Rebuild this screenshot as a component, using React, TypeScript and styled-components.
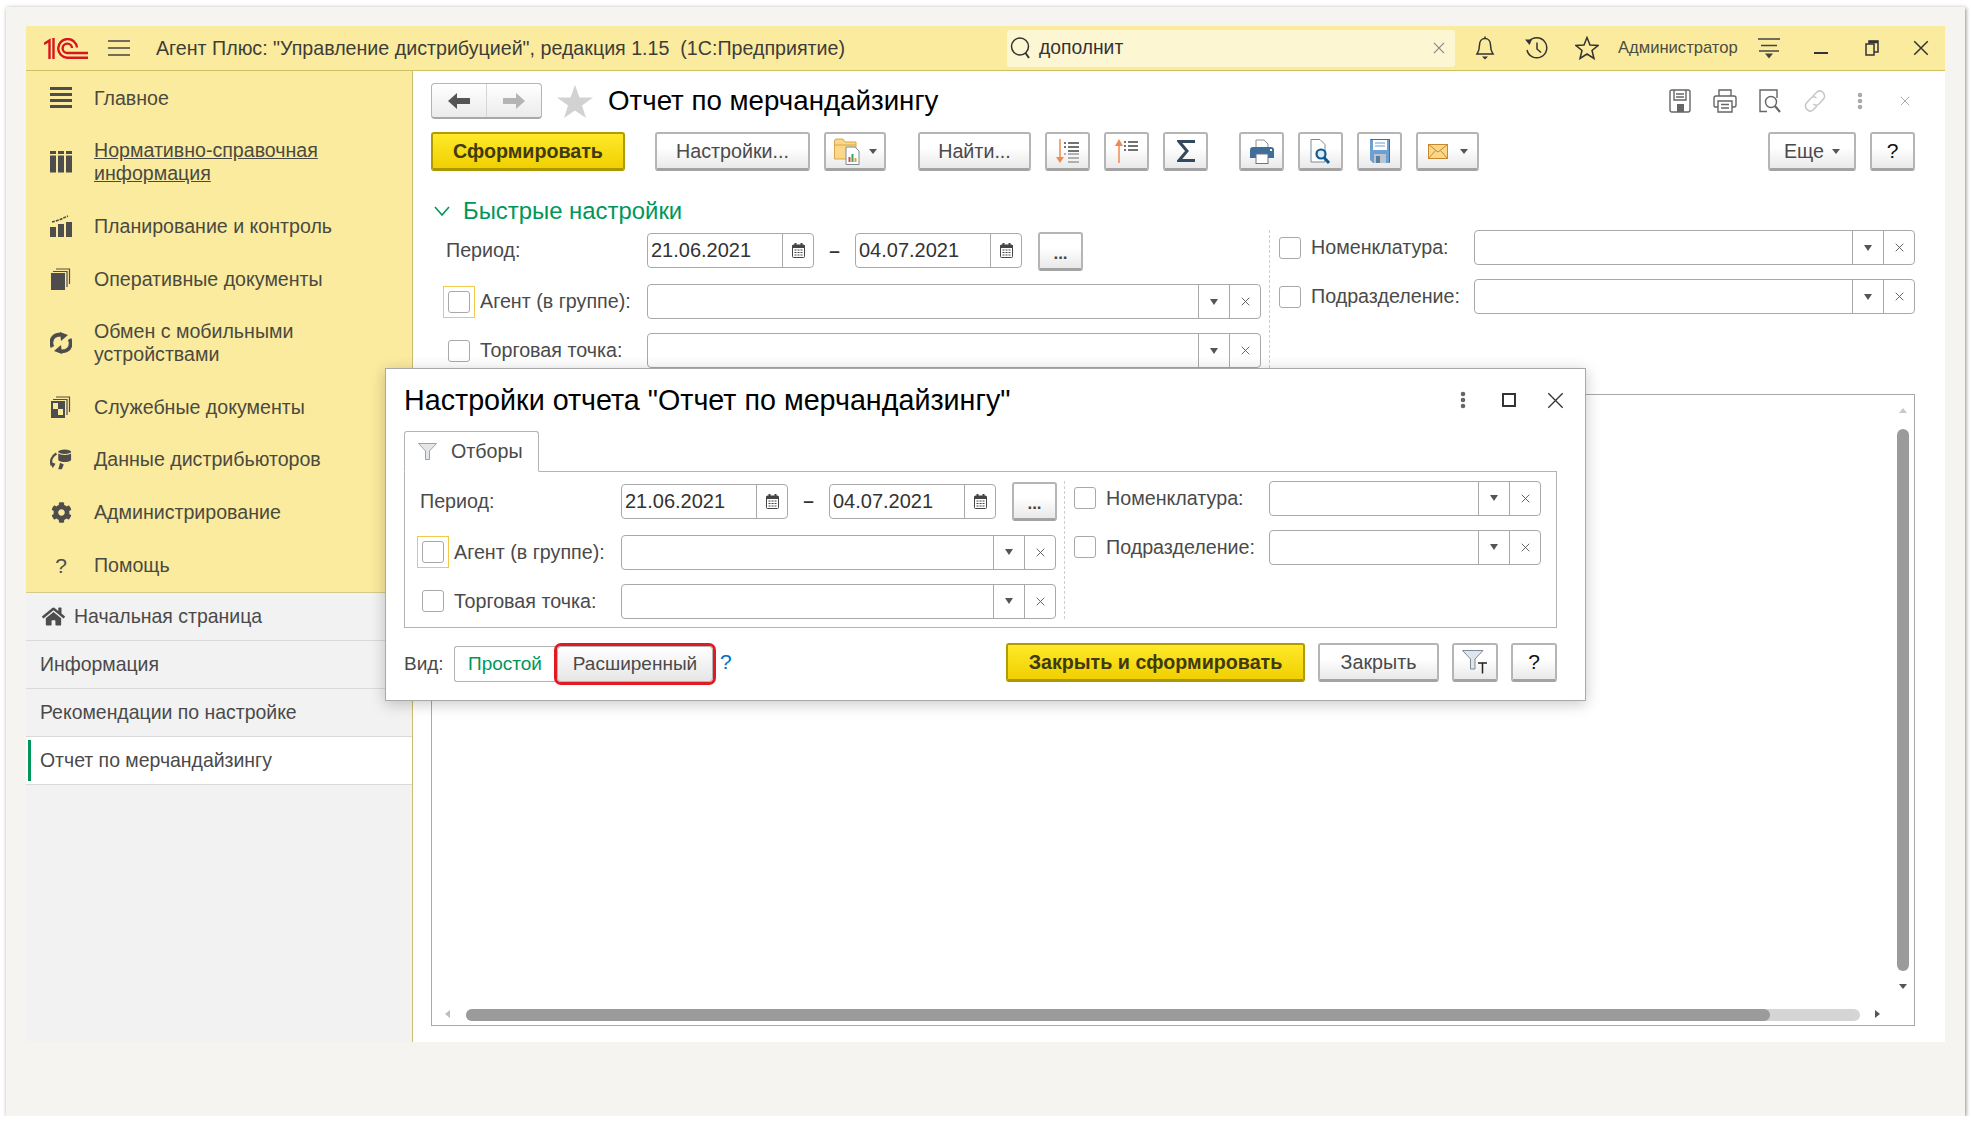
import React from 'react';
import styled, { createGlobalStyle } from 'styled-components';
import { FaCog, FaHome } from 'react-icons/fa';

const GlobalStyle = createGlobalStyle`
  html, body {
    margin: 0;
    padding: 0;
    background: #ffffff;
  }
  * {
    box-sizing: border-box;
  }
  body {
    font-family: "Liberation Sans", Arial, sans-serif;
    color: #4a4a4a;
  }
`;

const Frame = styled.div`
  position: relative;
  width: 1959px;
  height: 1109px;
  margin: 7px 0 0 6px;
  padding: 19px 20px 74px;
  background: #f5f4f1;
  box-shadow: 1px 1px 4px rgba(0, 0, 0, 0.45);
`;

const AppWindow = styled.div`
  display: flex;
  flex-direction: column;
  height: 100%;
`;

const Header = styled.header`
  display: flex;
  align-items: center;
  flex: 0 0 45px;
  padding-left: 18px;
  background: #fbeb9f;
  border-bottom: 1px solid #cfc163;
`;

const HamburgerSlot = styled.div`
  display: flex;
  margin-left: 20px;
`;

const AppTitle = styled.div`
  flex: 1;
  margin-left: 26px;
  font-size: 19.65px;
  color: #3d3d38;
  white-space: pre;
`;

const SearchBox = styled.div`
  display: flex;
  align-items: center;
  width: 448px;
  height: 37px;
  margin-right: 4px;
  padding: 0 10px 0 3px;
  background: #fdf6d3;
  border-radius: 3px;
  font-size: 19.3px;
  color: #333;
`;

const SearchText = styled.span`
  flex: 1;
  margin-left: 7px;
`;

const HeaderSlot = styled.div<{ $w?: number }>`
  display: flex;
  align-items: center;
  justify-content: center;
  width: ${(p) => p.$w ?? 51}px;
`;

const UserName = styled.div`
  width: 130px;
  padding-left: 6px;
  font-size: 16.6px;
  color: #4d4d40;
`;

const Body = styled.div`
  display: flex;
  flex: 1;
  min-height: 0;
`;

const Sidebar = styled.aside`
  display: flex;
  flex-direction: column;
  flex: 0 0 387px;
  background: #f2f2f2;
  border-right: 1px solid #c9bf6d;
`;

const MainMenu = styled.nav`
  padding: 1px 0;
  background: #fbeb9f;
  border-bottom: 1px solid #d4ca8c;
`;

const MenuItem = styled.div`
  display: flex;
  align-items: center;
  padding: 14.8px 0 14.8px 24px;
  font-size: 19.6px;
  line-height: 23px;
  color: #4a4a3f;
`;

const MenuIcon = styled.div`
  display: flex;
  align-items: center;
  justify-content: center;
  flex: 0 0 22px;
  height: 23px;
  margin-right: 22px;
  color: #4d4d4d;
  font-size: 21px;
  line-height: 23px;
`;

const MenuLink = styled.span`
  text-decoration: underline;
`;

const OpenRow = styled.div<{ $active?: boolean }>`
  position: relative;
  display: flex;
  align-items: center;
  height: 48px;
  padding-left: 14px;
  font-size: 19.45px;
  color: #4a4a4a;
  background: ${(p) => (p.$active ? '#ffffff' : 'transparent')};
  border-bottom: 1px solid #d9d9d9;

  ${(p) =>
    p.$active &&
    `&::before {
      content: '';
      position: absolute;
      left: 2px;
      top: 3px;
      bottom: 3px;
      width: 3px;
      background: #00965a;
    }`}
`;

const HomeIcon = styled(FaHome)`
  margin: 0 9px 0 2px;
  font-size: 23px;
  color: #4d4d4d;
`;

const Main = styled.main`
  display: flex;
  flex-direction: column;
  flex: 1;
  min-width: 0;
  padding: 12px 30px 16px 18px;
  background: #ffffff;
`;

const TitleRow = styled.div`
  display: flex;
  align-items: center;
  height: 36px;
`;

const NavGroup = styled.div`
  display: flex;
  width: 111px;
  height: 36px;
  border: 1px solid #b4b4b4;
  border-bottom: 2px solid #a8a8a8;
  border-radius: 4px;
  background: linear-gradient(#ffffff, #ebebeb);
`;

const NavCell = styled.div<{ $first?: boolean }>`
  display: flex;
  align-items: center;
  justify-content: center;
  flex: 1;
  border-right: ${(p) => (p.$first ? '1px solid #d6d6d6' : 'none')};
`;

const FavStar = styled.div`
  display: flex;
  margin: 0 15px;
`;

const PageTitle = styled.h1`
  flex: 1;
  margin: 0;
  font-size: 27.7px;
  font-weight: normal;
  color: #000;
`;

const PageTools = styled.div`
  display: flex;
  margin-right: -12px;
`;

const ToolSlot = styled.div`
  display: flex;
  align-items: center;
  justify-content: center;
  width: 45px;
`;

const Toolbar = styled.div`
  display: flex;
  margin-top: 13px;
`;

const ToolGroup = styled.div<{ $after?: number; $push?: boolean }>`
  display: flex;
  gap: 14px;
  margin-right: ${(p) => p.$after ?? 0}px;
  margin-left: ${(p) => (p.$push ? 'auto' : '0')};
`;

const Button = styled.div<{ $w: number; $h?: number; $primary?: boolean; $gap?: number }>`
  display: flex;
  align-items: center;
  justify-content: center;
  gap: ${(p) => p.$gap ?? 0}px;
  flex: 0 0 ${(p) => p.$w}px;
  width: ${(p) => p.$w}px;
  height: ${(p) => p.$h ?? 39}px;
  border-radius: 3px;
  font-size: 19.7px;
  font-weight: ${(p) => (p.$primary ? 'bold' : 'normal')};
  color: ${(p) => (p.$primary ? '#3f3a10' : '#4a4a4a')};
  background: ${(p) =>
    p.$primary ? 'linear-gradient(#ffe92a, #f0d000)' : 'linear-gradient(#ffffff 40%, #e9e9e9)'};
  border: 2px solid ${(p) => (p.$primary ? '#b09c00' : '#b5b5b5')};
  border-bottom-width: 3px;
  border-bottom-color: ${(p) => (p.$primary ? '#ab9700' : '#a3a3a3')};
`;

const Caret = styled.span`
  width: 0;
  height: 0;
  border-left: 4px solid transparent;
  border-right: 4px solid transparent;
  border-top: 5px solid #555;
`;

const HelpMark = styled.span`
  font-size: 21px;
  color: #111;
`;

const QuickHeader = styled.div`
  display: flex;
  align-items: center;
  height: 26px;
  margin-top: 27px;
  font-size: 23.9px;
  color: #00965a;
`;

const QuickChevron = styled.div`
  display: flex;
  margin: 0 13px 0 3px;
`;

const QuickForm = styled.div`
  margin: 6px 0 0 12px;
`;

const FormGrid = styled.div<{ $left: number; $right: number }>`
  display: grid;
  grid-template-columns: ${(p) => p.$left}px 1fr;
  width: ${(p) => p.$left + p.$right + 18}px;
`;

const LeftColumn = styled.div`
  display: flex;
  flex-direction: column;
  gap: 14px;
  padding: 3px 0 0;
`;

const RightColumn = styled.div`
  display: flex;
  flex-direction: column;
  gap: 14px;
  margin-left: 8px;
  padding-left: 9px;
  border-left: 1px dashed #cfcfcf;
`;

const FormRow = styled.div<{ $period?: boolean }>`
  display: flex;
  align-items: center;
  height: 35px;
  margin-bottom: ${(p) => (p.$period ? 2 : 0)}px;
`;

const LabelCell = styled.div<{ $w: number }>`
  display: flex;
  align-items: center;
  flex: 0 0 ${(p) => p.$w}px;
  font-size: 19.7px;
  color: #4a4a4a;
`;

const PeriodLabel = styled.span`
  margin-left: 3px;
`;

const CheckWrap = styled.div<{ $focus?: boolean }>`
  display: flex;
  align-items: center;
  justify-content: center;
  flex: 0 0 32px;
  height: 32px;
  margin-right: 5px;
  border: 1px solid ${(p) => (p.$focus ? '#f2c94c' : 'transparent')};
`;

const Check = styled.div`
  width: 22px;
  height: 22px;
  background: #fff;
  border: 1px solid #a9a9a9;
  border-radius: 3px;
`;

const RightCheck = styled(Check)`
  margin: 0 10px 0 0;
`;

const Field = styled.div<{ $w?: number }>`
  display: flex;
  align-items: stretch;
  flex: ${(p) => (p.$w ? `0 0 ${p.$w}px` : '1')};
  height: 35px;
  background: #fff;
  border: 1px solid #a9a9a9;
  border-radius: 4px;
`;

const FieldText = styled.div`
  display: flex;
  align-items: center;
  flex: 1;
  padding-left: 3px;
  font-size: 20px;
  color: #333;
`;

const FieldCell = styled.div`
  display: flex;
  align-items: center;
  justify-content: center;
  flex: 0 0 31px;
  border-left: 1px solid #a9a9a9;
`;

const DateDash = styled.div`
  flex: 0 0 41px;
  text-align: center;
  font-size: 19px;
  font-weight: bold;
  color: #333;
`;

const PickButton = styled(Button)`
  margin: -3px 0 -4px 16px;
  padding-top: 6px;
  font-size: 17px;
  font-weight: bold;
  color: #444;
`;

const ReportBox = styled.div`
  position: relative;
  flex: 1;
  margin-top: 26px;
  background: #fff;
  border: 1px solid #a9a9a9;
`;

const ScrollThumbV = styled.div`
  position: absolute;
  top: 34px;
  right: 5px;
  width: 12px;
  height: 542px;
  background: #9b9b9b;
  border-radius: 6px;
`;

const ScrollTrackH = styled.div`
  position: absolute;
  left: 34px;
  bottom: 4px;
  width: 1394px;
  height: 12px;
  background: #d5d5d5;
  border-radius: 6px;
`;

const ScrollThumbH = styled.div`
  width: 1304px;
  height: 100%;
  background: #9b9b9b;
  border-radius: 6px;
`;

const ScrollArrow = styled.div<{ $dir: 'up' | 'down' | 'left' | 'right' }>`
  position: absolute;
  width: 0;
  height: 0;
  ${(p) => {
    switch (p.$dir) {
      case 'up':
        return `top: 13px; right: 7px; border: 4px solid transparent; border-top: 0; border-bottom: 5px solid #c8c8c8;`;
      case 'down':
        return `bottom: 36px; right: 7px; border: 4px solid transparent; border-bottom: 0; border-top: 5px solid #555;`;
      case 'left':
        return `bottom: 7px; left: 13px; border: 4px solid transparent; border-left: 0; border-right: 5px solid #bdbdbd;`;
      default:
        return `bottom: 7px; right: 34px; border: 4px solid transparent; border-right: 0; border-left: 5px solid #555;`;
    }
  }}
`;

const Dialog = styled.section`
  position: absolute;
  left: 379px;
  top: 361px;
  display: flex;
  flex-direction: column;
  width: 1201px;
  height: 333px;
  padding: 0 28px 0 18px;
  background: #fff;
  border: 1px solid #a9a9a9;
  box-shadow: 0 3px 14px rgba(0, 0, 0, 0.22);
`;

const DialogHead = styled.div`
  display: flex;
  align-items: center;
  flex: 0 0 62px;
  margin-right: -21px;
`;

const DialogTitle = styled.h2`
  flex: 1;
  margin: 0;
  font-size: 28.7px;
  font-weight: normal;
  color: #000;
`;

const DialogTool = styled.div`
  display: flex;
  align-items: center;
  justify-content: center;
  width: 46px;
`;

const Tab = styled.div`
  display: flex;
  align-items: center;
  position: relative;
  z-index: 1;
  width: 135px;
  height: 41px;
  margin-bottom: -1px;
  padding-left: 13px;
  gap: 14px;
  font-size: 19.7px;
  color: #4a4a4a;
  background: #fff;
  border: 1px solid #b4b4b4;
  border-bottom-color: #fff;
  border-radius: 3px 3px 0 0;
`;

const TabPanel = styled.div`
  height: 157px;
  padding: 8.5px 0 0 12px;
  border: 1px solid #b4b4b4;
`;

const DialogFooter = styled.div`
  display: flex;
  align-items: flex-start;
  margin-top: 13.5px;
`;

const ViewLabel = styled.div`
  width: 50px;
  height: 39px;
  line-height: 43px;
  font-size: 19px;
  color: #4a4a4a;
`;

const ViewSimple = styled.div`
  width: 103px;
  height: 36px;
  margin-top: 4px;
  padding-left: 13px;
  line-height: 34px;
  font-size: 19px;
  color: #00965a;
  background: #fff;
  border: 1px solid #b4b4b4;
  border-right: 0;
  border-radius: 3px 0 0 3px;
`;

const ViewExtended = styled.div`
  width: 156px;
  height: 36px;
  margin-top: 4px;
  line-height: 34px;
  text-align: center;
  font-size: 19px;
  color: #4a4a4a;
  background: linear-gradient(#ffffff, #e6e6e6);
  border: 1px solid #b4b4b4;
  border-radius: 4px;
  outline: 3px solid #e21b22;
`;

const ViewHelp = styled.div`
  margin: 3px 0 0 7px;
  line-height: 34px;
  font-size: 21px;
  color: #0070c0;
`;

const FooterButtons = styled.div`
  display: flex;
  gap: 13px;
  margin: 1.5px 0 0 auto;
`;

const StrokeSvg = styled.svg`
  display: block;
  fill: none;
  stroke: currentColor;
  stroke-width: 1.5;
`;

const Logo1C = () => (
  <svg width="44" height="21" viewBox="0 0 44 21" fill="none" stroke="#d8141c" strokeWidth="2.4">
    <path d="M0 6 L5.5 2.5 V21" />
    <path d="M9.5 0 V21" />
    <path d="M44 19.8 H23 A9.4 9.4 0 1 1 33 9.5" />
    <path d="M44 15 H23 A4.7 4.7 0 1 1 28 10" />
  </svg>
);

const Hamburger = () => (
  <svg width="22" height="16" viewBox="0 0 22 16" stroke="#444" strokeWidth="1.4">
    <path d="M0 1 H22 M0 8 H22 M0 15 H22" />
  </svg>
);

const SearchIcon = () => (
  <StrokeSvg width="22" height="24" viewBox="0 0 22 24" color="#333">
    <circle cx="10" cy="10.5" r="8.5" />
    <path d="M15.5 17 L19 22" strokeWidth="2" />
  </StrokeSvg>
);

const ThinX = ({ size = 13, color = '#888', w = 1.3 }: { size?: number; color?: string; w?: number }) => (
  <svg width={size} height={size} viewBox="0 0 13 13" stroke={color} strokeWidth={w}>
    <path d="M1 1 L12 12 M12 1 L1 12" />
  </svg>
);

const BellIcon = () => (
  <StrokeSvg width="22" height="24" viewBox="0 0 22 24" color="#333">
    <path d="M3 18 C5 15 5.5 12 5.5 9 C5.5 5 8 2.5 11 2.5 C14 2.5 16.5 5 16.5 9 C16.5 12 17 15 19 18 Z" />
    <path d="M11 0.5 V2.5" />
    <path d="M8 20.5 H14 L11 23.5 Z" fill="#333" stroke="none" />
  </StrokeSvg>
);

const HistoryIcon = () => (
  <StrokeSvg width="24" height="24" viewBox="0 0 24 24" color="#333">
    <path d="M5 5.5 A10 10 0 1 1 3 14" />
    <path d="M13 6.5 V13 L17 16.5" />
    <path d="M1 3.5 L8 3.5 L5.5 9 Z" fill="#333" stroke="none" />
  </StrokeSvg>
);

const StarOutline = () => (
  <StrokeSvg width="24" height="24" viewBox="0 0 24 24" color="#333">
    <path d="M12 1.5 L15 9 L23 9.5 L17 14.5 L19 22.5 L12 18 L5 22.5 L7 14.5 L1 9.5 L9 9 Z" />
  </StrokeSvg>
);

const UserMenuIcon = () => (
  <svg width="24" height="22" viewBox="0 0 24 22" stroke="#444" strokeWidth="1.5">
    <path d="M1 2 H23 M4 8.5 H20" />
    <path d="M2 14 H22" />
    <path d="M8 16.5 H16 L12 21.5 Z" fill="#444" stroke="none" />
  </svg>
);

const MinimizeIcon = () => (
  <svg width="16" height="16" viewBox="0 0 16 16">
    <rect x="1" y="12" width="14" height="2" fill="#333" />
  </svg>
);

const RestoreIcon = () => (
  <svg width="14" height="16" viewBox="0 0 14 16" fill="none" stroke="#333" strokeWidth="1.5">
    <rect x="1" y="4" width="8" height="11" fill="#fbeb9f" />
    <path d="M4 4 V1 H13 V12 H9" />
    <path d="M4 2 H13" strokeWidth="2.5" />
  </svg>
);

const MenuBars = () => (
  <svg width="22" height="22" viewBox="0 0 22 22" fill="currentColor">
    <rect y="0" width="22" height="3" />
    <rect y="6" width="22" height="3" />
    <rect y="12" width="22" height="3" />
    <rect y="18" width="22" height="3" />
  </svg>
);

const TableIcon = () => (
  <svg width="22" height="22" viewBox="0 0 22 22" fill="currentColor">
    <rect x="0" y="0" width="6" height="3" />
    <rect x="8" y="0" width="6" height="3" />
    <rect x="16" y="0" width="6" height="3" />
    <rect x="0" y="4.5" width="6" height="17" />
    <rect x="8" y="4.5" width="6" height="17" />
    <rect x="16" y="4.5" width="6" height="17" />
  </svg>
);

const ChartIcon = () => (
  <svg width="22" height="22" viewBox="0 0 22 22" fill="currentColor">
    <rect x="0" y="12" width="6" height="10" />
    <rect x="8" y="9" width="6" height="13" />
    <rect x="16" y="7" width="6" height="15" />
    <path d="M2 7 L9 5 L18 1" fill="none" stroke="currentColor" strokeWidth="1.6" strokeDasharray="3 1" />
  </svg>
);

const DocsIcon = () => (
  <svg width="22" height="22" viewBox="0 0 22 22" fill="currentColor">
    <rect x="1" y="5" width="14" height="17" />
    <path d="M3 3.5 H17 V19" fill="none" stroke="currentColor" strokeWidth="1.2" />
    <path d="M6 1 H19.5 V16" fill="none" stroke="currentColor" strokeWidth="1.2" />
  </svg>
);

const DocsCheckIcon = () => (
  <svg width="22" height="22" viewBox="0 0 22 22" fill="currentColor">
    <rect x="1" y="5" width="14" height="17" />
    <rect x="3" y="7" width="5" height="6" fill="#fbeb9f" />
    <rect x="8" y="13" width="5" height="6" fill="#fbeb9f" />
    <path d="M3 3.5 H17 V19" fill="none" stroke="currentColor" strokeWidth="1.2" />
    <path d="M6 1 H19.5 V16" fill="none" stroke="currentColor" strokeWidth="1.2" />
  </svg>
);

const SyncIcon = () => (
  <svg width="22" height="22" viewBox="0 0 22 22" fill="none" stroke="currentColor" strokeWidth="3.8">
    <path d="M2.5 15 A9 9 0 0 1 3.5 5 Q6 2.5 11 2.5" />
    <path d="M19.5 7 A9 9 0 0 1 18.5 17 Q16 19.5 11 19.5" />
    <path d="M10 0 L18 3 L11 9 Z" fill="currentColor" stroke="none" />
    <path d="M12 22 L4 19 L11 13 Z" fill="currentColor" stroke="none" />
  </svg>
);

const DistributorIcon = () => (
  <svg width="22" height="22" viewBox="0 0 24 24" fill="currentColor">
    <ellipse cx="16" cy="3" rx="7" ry="2.5" />
    <path d="M9 5 C11 7 21 7 23 5 V12 C21 15 11 15 9 12 Z" />
    <path d="M7 5 C2 8 0 13 2 18" fill="none" stroke="currentColor" strokeWidth="2.6" />
    <path d="M0 14 L6 16 L3 21 Z" />
    <path d="M15 17 L13 22 H9 L11 15 Z" />
  </svg>
);

const ArrowLeft = ({ color }: { color: string }) => (
  <svg width="22" height="16" viewBox="0 0 22 16" fill={color}>
    <path d="M0 8 L9 0 V5 H22 V11 H9 V16 Z" />
  </svg>
);

const ArrowRight = ({ color }: { color: string }) => (
  <svg width="22" height="16" viewBox="0 0 22 16" fill={color}>
    <path d="M22 8 L13 0 V5 H0 V11 H13 V16 Z" />
  </svg>
);

const BigStar = () => (
  <svg width="36" height="33" viewBox="0 0 36 33" fill="#d2d2d2">
    <path d="M18 0 L22.5 12.5 L36 12.5 L25 20.5 L29 33 L18 25.5 L7 33 L11 20.5 L0 12.5 L13.5 12.5 Z" />
  </svg>
);

const SmallSaveIcon = () => (
  <svg width="22" height="24" viewBox="0 0 22 24" fill="none" stroke="#666" strokeWidth="1.4">
    <path d="M1 3 Q1 1 3 1 H19 Q21 1 21 3 V21 Q21 23 19 23 H3 Q1 23 1 21 Z" />
    <path d="M5 1 V11 H17 V1 M7 5 H15 M7 8 H15" />
    <rect x="8" y="15" width="7" height="8" fill="#666" stroke="none" />
  </svg>
);

const SmallPrintIcon = () => (
  <svg width="24" height="24" viewBox="0 0 24 24" fill="none" stroke="#666" strokeWidth="1.4">
    <path d="M6 7 V1 H18 V7" />
    <path d="M5 18 H2 Q1 18 1 16 V9 Q1 7 3 7 H21 Q23 7 23 9 V16 Q23 18 21 18 H19" />
    <path d="M5 12 H19 V23 H5 Z" />
    <path d="M8 15.5 H16 M8 19 H16" />
  </svg>
);

const SmallPreviewIcon = () => (
  <svg width="24" height="24" viewBox="0 0 24 24" fill="none" stroke="#666" strokeWidth="1.4">
    <path d="M9 22.5 H2 V1 H19 V9" />
    <circle cx="13" cy="13" r="5.5" />
    <path d="M17 17 L22 23" strokeWidth="2.2" />
  </svg>
);

const SmallLinkIcon = () => (
  <svg width="24" height="24" viewBox="0 0 24 24" fill="none" stroke="#c6c6c6" strokeWidth="1.5">
    <path d="M10 7 L14 3 Q17 0.5 20 3.5 Q23 7 20.5 10 L16 15 Q13 17.5 10.5 15" />
    <path d="M14 17 L10 21 Q7 23.5 4 20.5 Q1 17 3.5 14 L8 9 Q11 6.5 13.5 9" />
  </svg>
);

const Dots = ({ color, h = 18 }: { color: string; h?: number }) => (
  <svg width="6" height={h} viewBox="0 0 6 18" fill={color}>
    <circle cx="3" cy="3" r="2.3" />
    <circle cx="3" cy="9" r="2.3" />
    <circle cx="3" cy="15" r="2.3" />
  </svg>
);

const FolderReportIcon = () => (
  <svg width="26" height="27" viewBox="0 0 26 27">
    <path d="M0.5 3 Q0.5 1 2.5 1 H9 L11 4 H22 V21 H0.5 Z" fill="#fbd889" stroke="#d9a64a" />
    <path d="M0.5 7 H22" stroke="#d9a64a" />
    <path d="M12 9 H21 L25 13 V26.5 H12 Z" fill="#fff" stroke="#7d8a99" />
    <rect x="14.5" y="19" width="2" height="5" fill="#d94a3a" />
    <rect x="17.5" y="16" width="2" height="8" fill="#3aa655" />
    <rect x="20.5" y="20" width="2" height="4" fill="#e0a030" />
  </svg>
);

const SortDownIcon = () => (
  <svg width="24" height="25" viewBox="0 0 24 25" fill="none">
    <path d="M4 0 V22" stroke="#f08a50" strokeWidth="1.5" />
    <path d="M0 18 H8 L4 24 Z" fill="#f08a50" />
    <path d="M8 4 H10 M12 4 H23 M8 8 H10 M12 8 H23 M12 12 H23" stroke="#444" strokeWidth="1.6" />
    <path d="M8 15 H10 M12 15 H23 M12 19 H23 M12 23 H23" stroke="#999" strokeWidth="1.6" />
  </svg>
);

const SortUpIcon = () => (
  <svg width="24" height="25" viewBox="0 0 24 25" fill="none">
    <path d="M4 24 V3" stroke="#f08a50" strokeWidth="1.5" />
    <path d="M0 7 H8 L4 0 Z" fill="#f08a50" />
    <path d="M9 3 H11 M13 3 H23 M9 7 H11 M13 7 H23 M9 11 H11 M13 11 H23" stroke="#444" strokeWidth="1.7" />
  </svg>
);

const SigmaIcon = () => (
  <svg width="18" height="22" viewBox="0 0 18 22" fill="none" stroke="#34495e" strokeWidth="3">
    <path d="M18 1.5 H2 L10 11 L2 20.5 H18" />
  </svg>
);

const PrintIcon = () => (
  <svg width="24" height="25" viewBox="0 0 24 25">
    <path d="M6 1 H14 L18 5 V10 H6 Z" fill="#fff" stroke="#8a9099" />
    <path d="M0 11 Q0 8 3 8 H21 Q24 8 24 11 V19 H0 Z" fill="#3f6e9a" />
    <rect x="6" y="15" width="12" height="9.5" fill="#fff" stroke="#6b7580" />
    <rect x="20" y="10" width="2" height="2" fill="#fff" />
  </svg>
);

const PreviewIcon = () => (
  <svg width="22" height="25" viewBox="0 0 22 25">
    <path d="M1 0.5 H10 L15 5.5 V23 H1 Z" fill="#fff" stroke="#7d8a99" />
    <circle cx="11" cy="15" r="4.5" fill="#dceaf5" stroke="#0f5a8f" strokeWidth="2.2" />
    <path d="M14 18.5 L19 24" stroke="#0f5a8f" strokeWidth="3" />
  </svg>
);

const SaveIcon = () => (
  <svg width="20" height="24" viewBox="0 0 20 24">
    <path d="M0 0 H20 V24 H3 L0 21 Z" fill="#6c9fd2" />
    <rect x="3" y="1" width="14" height="10" fill="#fff" />
    <path d="M5 4 H15 M5 7 H15" stroke="#6c9fd2" />
    <rect x="4" y="15" width="12" height="9" fill="#b8c4cf" />
    <rect x="6" y="17" width="4" height="7" fill="#5a7d9c" />
    <path d="M0.5 0.5 H19.5 V23.5" fill="none" stroke="#3f6e9a" />
  </svg>
);

const MailIcon = () => (
  <svg width="20" height="15" viewBox="0 0 20 15" fill="#fbd889" stroke="#c9862b" strokeWidth="1">
    <rect x="0.5" y="0.5" width="19" height="14" />
    <path d="M0.5 0.5 L10 8 L19.5 0.5 M0.5 14.5 L7.5 6.5 M19.5 14.5 L12.5 6.5" fill="none" />
  </svg>
);

const Chevron = () => (
  <svg width="16" height="10" viewBox="0 0 16 10" fill="none" stroke="#00965a" strokeWidth="1.6">
    <path d="M1 1 L8 9 L15 1" />
  </svg>
);

const CalendarIcon = () => (
  <svg width="13" height="15" viewBox="0 0 13 15">
    <rect x="0.5" y="2" width="12" height="12.5" rx="1" fill="#fff" stroke="#444" />
    <rect x="0.5" y="2" width="12" height="3" fill="#444" />
    <rect x="2.5" y="0" width="2" height="3" fill="#444" />
    <rect x="8.5" y="0" width="2" height="3" fill="#444" />
    <path d="M2.5 7 H10.5 M2.5 9.5 H10.5 M2.5 12 H10.5" stroke="#444" strokeDasharray="2 1" />
  </svg>
);

const DropCaret = styled.span`
  width: 0;
  height: 0;
  border-left: 4px solid transparent;
  border-right: 4px solid transparent;
  border-top: 6px solid #555;
`;

const FunnelIcon = () => (
  <svg width="19" height="17" viewBox="0 0 19 17" fill="#e4e7ea" stroke="#9aa3ab">
    <path d="M0.5 0.5 H18.5 L11.5 8 V16.5 H7.5 V8 Z" />
  </svg>
);

const FilterTIcon = () => (
  <svg width="26" height="24" viewBox="0 0 26 24">
    <path d="M0.5 0.5 H21 L13 9 V19 H8.5 V9 Z" fill="#dfe5ea" stroke="#7d8a99" />
    <path d="M16 13 H25 M20.5 13 V23.5" stroke="#222" strokeWidth="1.5" />
  </svg>
);

const MaximizeIcon = () => (
  <svg width="14" height="14" viewBox="0 0 14 14" fill="none" stroke="#333" strokeWidth="2">
    <rect x="1" y="1" width="12" height="12" />
  </svg>
);

const menu: { icon: React.ReactNode; label: React.ReactNode }[] = [
  { icon: <MenuBars />, label: 'Главное' },
  {
    icon: <TableIcon />,
    label: (
      <MenuLink>
        Нормативно-справочная
        <br />
        информация
      </MenuLink>
    ),
  },
  { icon: <ChartIcon />, label: 'Планирование и контроль' },
  { icon: <DocsIcon />, label: 'Оперативные документы' },
  {
    icon: <SyncIcon />,
    label: (
      <>
        Обмен с мобильными
        <br />
        устройствами
      </>
    ),
  },
  { icon: <DocsCheckIcon />, label: 'Служебные документы' },
  { icon: <DistributorIcon />, label: 'Данные дистрибьюторов' },
  { icon: <FaCog />, label: 'Администрирование' },
  { icon: '?', label: 'Помощь' },
];

const SelectField = () => (
  <Field>
    <FieldText />
    <FieldCell>
      <DropCaret />
    </FieldCell>
    <FieldCell>
      <ThinX size={9} color="#555" />
    </FieldCell>
  </Field>
);

const DateField = ({ value }: { value: string }) => (
  <Field $w={167}>
    <FieldText>{value}</FieldText>
    <FieldCell>
      <CalendarIcon />
    </FieldCell>
  </Field>
);

// the same filter block is shown on the page and in the settings dialog
const FilterForm = ({ left, right }: { left: number; right: number }) => (
  <FormGrid $left={left} $right={right}>
    <LeftColumn>
      <FormRow $period>
        <LabelCell $w={204}>
          <PeriodLabel>Период:</PeriodLabel>
        </LabelCell>
        <DateField value="21.06.2021" />
        <DateDash>–</DateDash>
        <DateField value="04.07.2021" />
        <PickButton $w={45}>...</PickButton>
      </FormRow>
      <FormRow>
        <LabelCell $w={204}>
          <CheckWrap $focus>
            <Check />
          </CheckWrap>
          Агент (в группе):
        </LabelCell>
        <SelectField />
      </FormRow>
      <FormRow>
        <LabelCell $w={204}>
          <CheckWrap>
            <Check />
          </CheckWrap>
          Торговая точка:
        </LabelCell>
        <SelectField />
      </FormRow>
    </LeftColumn>
    <RightColumn>
      <FormRow>
        <LabelCell $w={195}>
          <RightCheck />
          Номенклатура:
        </LabelCell>
        <SelectField />
      </FormRow>
      <FormRow>
        <LabelCell $w={195}>
          <RightCheck />
          Подразделение:
        </LabelCell>
        <SelectField />
      </FormRow>
    </RightColumn>
  </FormGrid>
);

const App: React.FC = () => {
  return (
    <>
      <GlobalStyle />
      <Frame>
        <AppWindow>
          <Header>
            <Logo1C />
            <HamburgerSlot>
              <Hamburger />
            </HamburgerSlot>
            <AppTitle>Агент Плюс: "Управление дистрибуцией", редакция 1.15  (1С:Предприятие)</AppTitle>
            <SearchBox>
              <SearchIcon />
              <SearchText>дополнит</SearchText>
              <ThinX size={12} />
            </SearchBox>
            <HeaderSlot><BellIcon /></HeaderSlot>
            <HeaderSlot><HistoryIcon /></HeaderSlot>
            <HeaderSlot><StarOutline /></HeaderSlot>
            <UserName>Администратор</UserName>
            <HeaderSlot $w={53}><UserMenuIcon /></HeaderSlot>
            <HeaderSlot><MinimizeIcon /></HeaderSlot>
            <HeaderSlot><RestoreIcon /></HeaderSlot>
            <HeaderSlot $w={48}><ThinX size={16} color="#333" w={1.2} /></HeaderSlot>
          </Header>
          <Body>
            <Sidebar>
              <MainMenu>
                {menu.map((item, i) => (
                  <MenuItem key={i}>
                    <MenuIcon>{item.icon}</MenuIcon>
                    <span>{item.label}</span>
                  </MenuItem>
                ))}
              </MainMenu>
              <OpenRow>
                <HomeIcon />
                Начальная страница
              </OpenRow>
              <OpenRow>Информация</OpenRow>
              <OpenRow>Рекомендации по настройке</OpenRow>
              <OpenRow $active>Отчет по мерчандайзингу</OpenRow>
            </Sidebar>
            <Main>
              <TitleRow>
                <NavGroup>
                  <NavCell $first><ArrowLeft color="#555" /></NavCell>
                  <NavCell><ArrowRight color="#b4b4b4" /></NavCell>
                </NavGroup>
                <FavStar><BigStar /></FavStar>
                <PageTitle>Отчет по мерчандайзингу</PageTitle>
                <PageTools>
                  <ToolSlot><SmallSaveIcon /></ToolSlot>
                  <ToolSlot><SmallPrintIcon /></ToolSlot>
                  <ToolSlot><SmallPreviewIcon /></ToolSlot>
                  <ToolSlot><SmallLinkIcon /></ToolSlot>
                  <ToolSlot><Dots color="#aaa" /></ToolSlot>
                  <ToolSlot><ThinX size={10} color="#aaa" /></ToolSlot>
                </PageTools>
              </TitleRow>
              <Toolbar>
                <ToolGroup $after={30}>
                  <Button $w={194} $primary>Сформировать</Button>
                </ToolGroup>
                <ToolGroup $after={32}>
                  <Button $w={155}>Настройки...</Button>
                  <Button $w={62} $gap={9}><FolderReportIcon /><Caret /></Button>
                </ToolGroup>
                <ToolGroup $after={31}>
                  <Button $w={113}>Найти...</Button>
                  <Button $w={45}><SortDownIcon /></Button>
                  <Button $w={45}><SortUpIcon /></Button>
                  <Button $w={45}><SigmaIcon /></Button>
                </ToolGroup>
                <ToolGroup>
                  <Button $w={45}><PrintIcon /></Button>
                  <Button $w={45}><PreviewIcon /></Button>
                  <Button $w={45}><SaveIcon /></Button>
                  <Button $w={63} $gap={12}><MailIcon /><Caret /></Button>
                </ToolGroup>
                <ToolGroup $push>
                  <Button $w={88} $gap={8}>Еще <Caret /></Button>
                  <Button $w={45}><HelpMark>?</HelpMark></Button>
                </ToolGroup>
              </Toolbar>
              <QuickHeader>
                <QuickChevron><Chevron /></QuickChevron>
                Быстрые настройки
              </QuickHeader>
              <QuickForm>
                <FilterForm left={818} right={636} />
              </QuickForm>
              <ReportBox>
                <ScrollArrow $dir="up" />
                <ScrollThumbV />
                <ScrollArrow $dir="down" />
                <ScrollArrow $dir="left" />
                <ScrollTrackH>
                  <ScrollThumbH />
                </ScrollTrackH>
                <ScrollArrow $dir="right" />
              </ReportBox>
            </Main>
          </Body>
        </AppWindow>
        <Dialog>
          <DialogHead>
            <DialogTitle>Настройки отчета "Отчет по мерчандайзингу"</DialogTitle>
            <DialogTool><Dots color="#666" /></DialogTool>
            <DialogTool><MaximizeIcon /></DialogTool>
            <DialogTool><ThinX size={17} color="#333" w={1} /></DialogTool>
          </DialogHead>
          <Tab>
            <FunnelIcon />
            Отборы
          </Tab>
          <TabPanel>
            <FilterForm left={639} right={467} />
          </TabPanel>
          <DialogFooter>
            <ViewLabel>Вид:</ViewLabel>
            <ViewSimple>Простой</ViewSimple>
            <ViewExtended>Расширенный</ViewExtended>
            <ViewHelp>?</ViewHelp>
            <FooterButtons>
              <Button $w={299} $primary>Закрыть и сформировать</Button>
              <Button $w={121}>Закрыть</Button>
              <Button $w={46}><FilterTIcon /></Button>
              <Button $w={46}><HelpMark>?</HelpMark></Button>
            </FooterButtons>
          </DialogFooter>
        </Dialog>
      </Frame>
    </>
  );
};

export default App;
